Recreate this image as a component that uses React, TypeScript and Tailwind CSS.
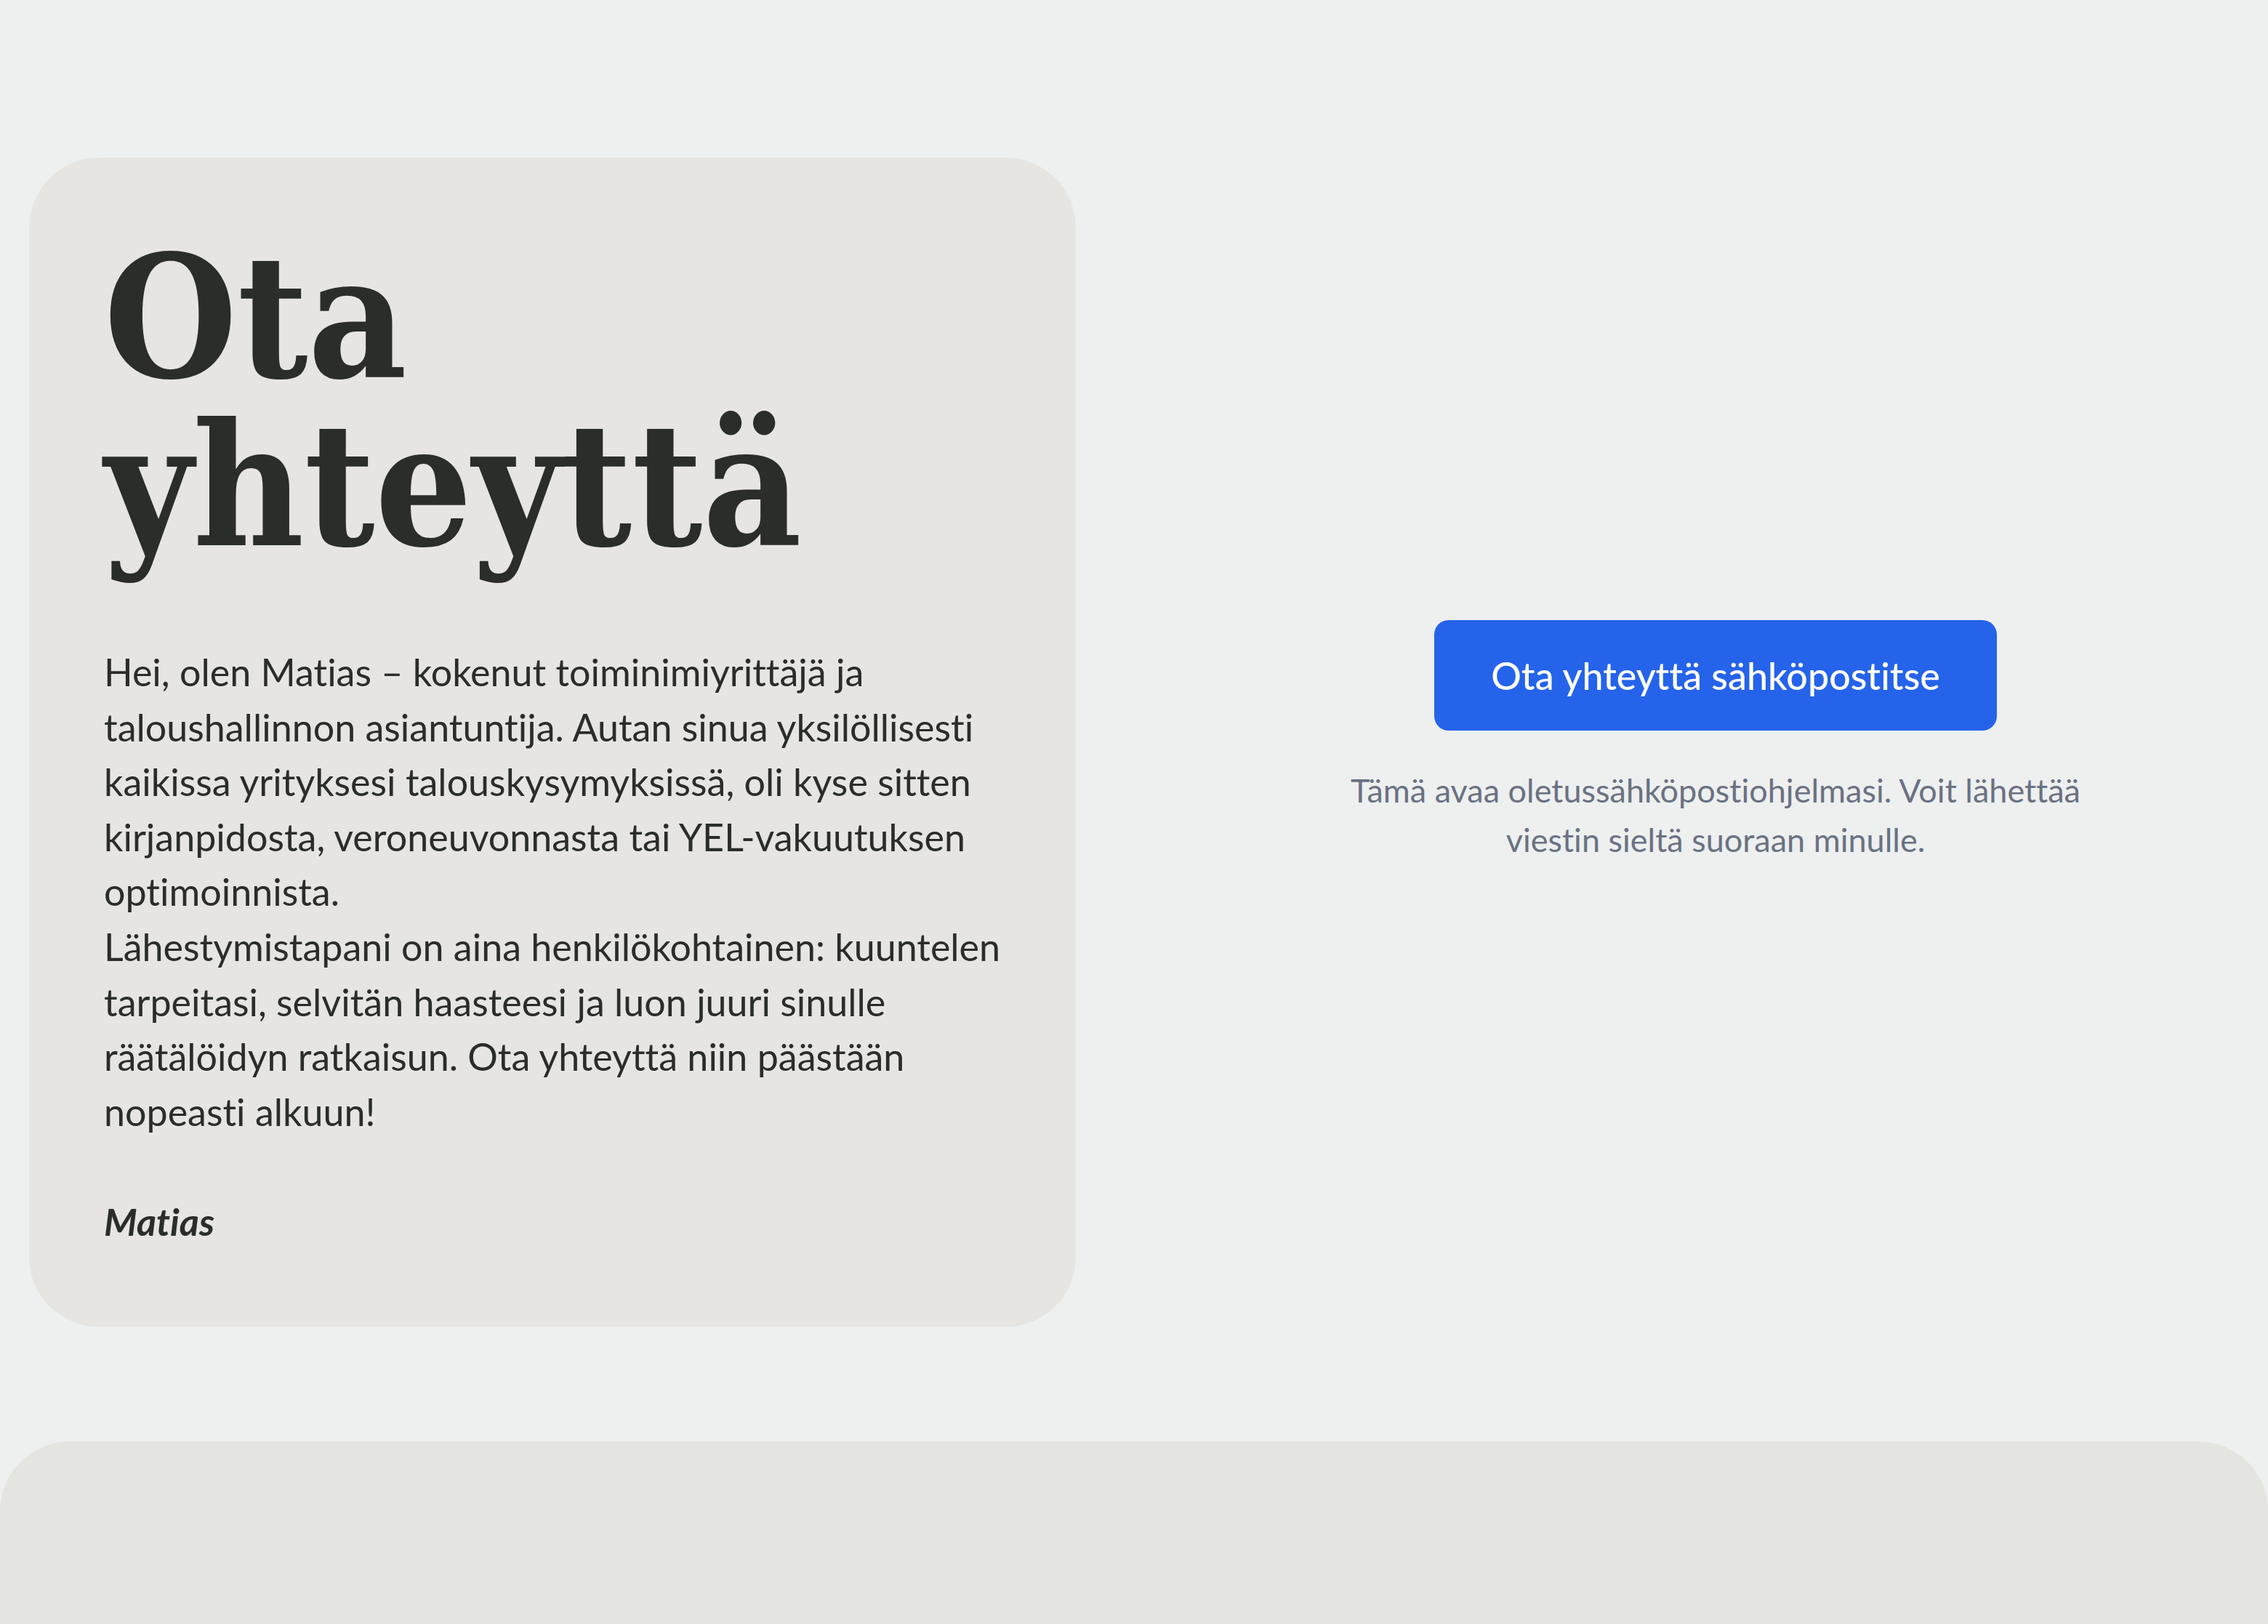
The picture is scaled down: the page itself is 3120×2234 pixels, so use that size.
export default function App() {
  return (
    <div className="min-h-screen bg-[#edf0ef] font-['Lato','Noto_Sans',sans-serif] text-[#2a2d28] [font-variant-ligatures:none]">
      <main className="grid grid-cols-2 gap-[160px] px-[40px] pt-[217px] pb-[158px]">
        {/* Intro card */}
        <section className="rounded-[96px] bg-[#e6e5e1] px-[103px] pt-[104px] pb-[106px]">
          <h1 className="font-['DejaVu_Serif_Condensed','DejaVu_Serif',serif] text-[234px] font-bold leading-[231px] tracking-[0px] text-[#2a2d28]">
            Ota yhteyttä
          </h1>
          <div className="mt-[104px] text-[52px] leading-[75.6px]">
            <p>
              Hei, olen Matias – kokenut toiminimiyrittäjä ja taloushallinnon asiantuntija. Autan sinua
              yksilöllisesti kaikissa yrityksesi talouskysymyksissä, oli kyse sitten kirjanpidosta,
              veroneuvonnasta tai YEL-vakuutuksen optimoinnista.
            </p>
            <p>
              Lähestymistapani on aina henkilökohtainen: kuuntelen tarpeitasi, selvitän haasteesi ja
              luon juuri sinulle räätälöidyn ratkaisun. Ota yhteyttä niin päästään nopeasti alkuun!
            </p>
            <p className="mt-[76px] font-bold italic">Matias</p>
          </div>
        </section>

        {/* Contact */}
        <section className="flex flex-col items-center justify-center text-center">
          <a
            href="mailto:"
            className="rounded-[20px] bg-[#2563eb] px-[78px] py-[40px] text-[52px] font-medium leading-[72px] text-white"
          >
            Ota yhteyttä sähköpostitse
          </a>
          <p className="mt-[48px] max-w-[1040px] text-[45px] leading-[68px] text-[#6b7182]">
            Tämä avaa oletussähköpostiohjelmasi. Voit lähettää viestin sieltä suoraan minulle.
          </p>
        </section>
      </main>

      <footer className="h-[254px] rounded-t-[96px] bg-[#e4e5e0]" />
    </div>
  );
}
